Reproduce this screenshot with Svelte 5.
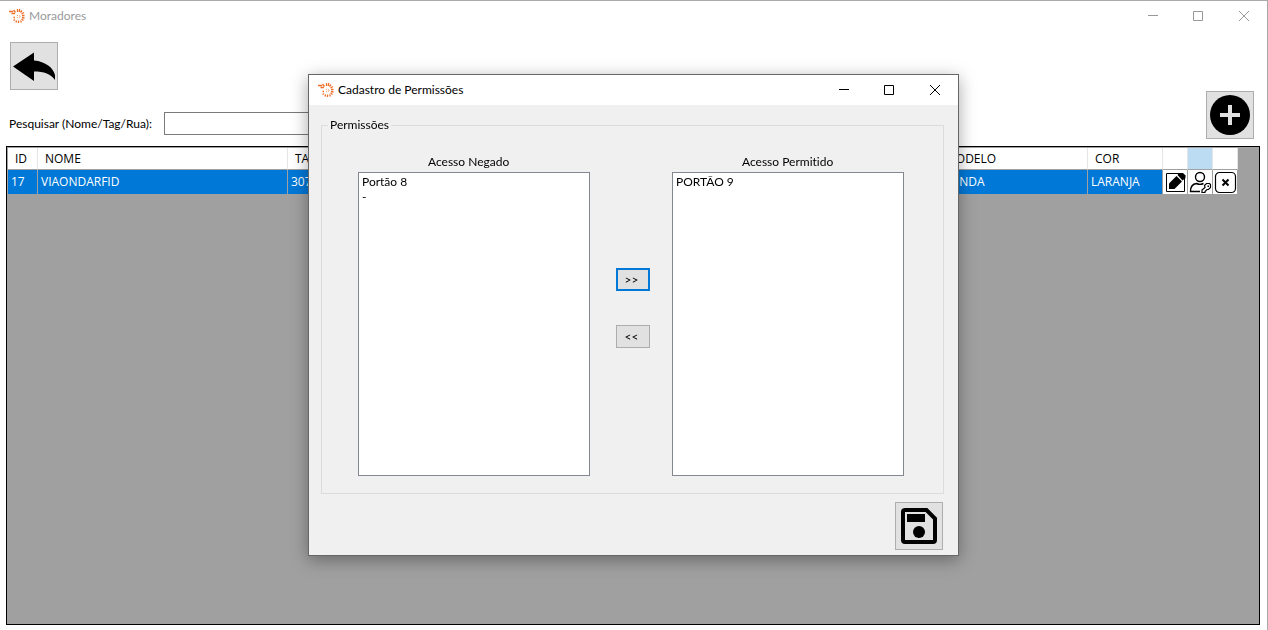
<script lang="ts">
  interface Resident {
    id: number
    name: string
    tag: string
    model: string
    color: string
  }

  const residents: Resident[] = [
    { id: 17, name: "VIAONDARFID", tag: "307", model: "HONDA", color: "LARANJA" },
  ]

  let search = $state("")
  let denied = $state(["Portão 8", "-"])
  let allowed = $state(["PORTÃO 9"])
  let deniedPicked: string[] = $state([])
  let allowedPicked: string[] = $state([])

  function grant() {
    allowed = [...allowed, ...deniedPicked]
    denied = denied.filter((gate) => !deniedPicked.includes(gate))
    deniedPicked = []
  }

  function revoke() {
    denied = [...denied, ...allowedPicked]
    allowed = allowed.filter((gate) => !allowedPicked.includes(gate))
    allowedPicked = []
  }
</script>

{#snippet titleBar(title: string)}
  <header class="title-bar">
    <svg class="logo" viewBox="0 0 16 16" aria-hidden="true">
      <g fill="none" stroke="#f0702a">
        <path
          d="M0 3.5h4M2.5 5.5H6M4.5 2l2 2.5M8.5 1v3M10.8 1l-.6 3M13 2.5l-1.5 2M15 4.5L12.5 6M15.5 7.5H13M15.5 10l-2.5-.5M14.5 12.5l-2-1.5M12.5 14.5l-1-2M9.5 15v-2.5M7 14.5l.5-2M4.5 12.5l1.5-1M4.5 9.5H6"
          stroke-width="1.3"
        />
        <circle cx="9.5" cy="8.5" r="1.5" stroke-width="0.8" stroke-dasharray="1.2 1.2" />
      </g>
    </svg>
    <span class="title">{title}</span>
    <div class="window-controls">
      <button type="button" aria-label="Minimizar">
        <svg viewBox="0 0 11 11"><path d="M1 4.5h10" /></svg>
      </button>
      <button type="button" aria-label="Maximizar">
        <svg viewBox="0 0 11 11"><path d="M0.5 0.5h9v9h-9z" /></svg>
      </button>
      <button type="button" aria-label="Fechar">
        <svg viewBox="0 0 11 11"><path d="M0 0l10 10M10 0l-10 10" /></svg>
      </button>
    </div>
  </header>
{/snippet}

<main class="window">
  {@render titleBar("Moradores")}

  <div class="toolbar">
    <div class="tools">
      <button type="button" class="tool-button" aria-label="Voltar">
        <svg viewBox="0 0 46 46">
          <path d="M2 23.5L23 9.5v8C34.5 18.5 42.5 25 44 32v5C40 31 33 28.5 23 28.5V38z" />
        </svg>
      </button>
      <div class="search">
        <label for="search">Pesquisar (Nome/Tag/Rua):</label>
        <input id="search" type="text" bind:value={search} />
      </div>
    </div>
    <button type="button" class="tool-button" aria-label="Adicionar">
      <svg viewBox="0 0 46 46">
        <circle cx="23" cy="23" r="20" />
        <path d="M23 13v20M13 23h20" stroke="#e1e1e1" stroke-width="4" />
      </svg>
    </button>
  </div>

  <div class="grid">
    <table>
      <colgroup>
        <col class="col-id" />
        <col class="col-name" />
        <col />
        <col class="col-model" />
        <col class="col-color" />
        <col class="col-action" />
        <col class="col-action" />
        <col class="col-action" />
      </colgroup>
      <thead>
        <tr>
          <th>ID</th>
          <th>NOME</th>
          <th>TAG</th>
          <th>MODELO</th>
          <th>COR</th>
          <th></th>
          <th class="current"></th>
          <th></th>
        </tr>
      </thead>
      <tbody>
        {#each residents as resident (resident.id)}
          <tr>
            <td>{resident.id}</td>
            <td>{resident.name}</td>
            <td>{resident.tag}</td>
            <td>{resident.model}</td>
            <td>{resident.color}</td>
            <td class="action">
              <button type="button" aria-label="Editar">
                <svg viewBox="0 0 24 24">
                  <path d="M17 3.5H3.5v18h18V8" fill="none" stroke="#000" />
                  <path d="M6 19v-5.5L13.5 6l5.5 5.5-7.5 7.5z" />
                  <path d="M14.5 5L16 3h4l2.5 2.5V8l-3 2.5z" />
                </svg>
              </button>
            </td>
            <td class="action">
              <button type="button" aria-label="Permissões">
                <svg viewBox="0 0 24 24" fill="none" stroke="#000" stroke-width="1.4">
                  <circle cx="12" cy="7" r="4.5" />
                  <path d="M12 21.5H2.5c0-5 2-7.5 6-8 2 1 5 1 7 0" />
                  <path d="M16.5 15.5l2-2h3l1 1v3l-2 2h-1.5L17 21.500v1h-3v-2.500l3-2.500z" stroke-width="1.2" />
                  <path d="M19.5 15.5h1.5v1.5h-1.5z" fill="#000" stroke="none" />
                </svg>
              </button>
            </td>
            <td class="action">
              <button type="button" aria-label="Excluir">
                <svg viewBox="0 0 24 24" fill="none" stroke="#000">
                  <rect x="2.5" y="2.5" width="20" height="20" rx="4" stroke-width="1.2" />
                  <path d="M9.5 9.5l6 6M15.5 9.5l-6 6" stroke-width="2" />
                </svg>
              </button>
            </td>
          </tr>
        {/each}
      </tbody>
    </table>
  </div>
</main>

<div class="overlay">
  <div class="dialog" role="dialog" aria-label="Cadastro de Permissões">
    {@render titleBar("Cadastro de Permissões")}
    <form class="dialog-body" onsubmit={(e) => e.preventDefault()}>
      <fieldset>
        <legend>Permissões</legend>
        <div class="transfer">
          <div class="side">
            <label for="denied">Acesso Negado</label>
            <select id="denied" multiple bind:value={deniedPicked}>
              {#each denied as gate}
                <option value={gate}>{gate}</option>
              {/each}
            </select>
          </div>
          <div class="moves">
            <button type="button" class="focused" aria-label="Permitir" onclick={grant}>&gt;&gt;</button>
            <button type="button" aria-label="Negar" onclick={revoke}>&lt;&lt;</button>
          </div>
          <div class="side">
            <label for="allowed">Acesso Permitido</label>
            <select id="allowed" multiple bind:value={allowedPicked}>
              {#each allowed as gate}
                <option value={gate}>{gate}</option>
              {/each}
            </select>
          </div>
        </div>
      </fieldset>
      <button type="submit" class="tool-button save" aria-label="Salvar">
        <svg viewBox="0 0 46 46">
          <path
            d="M9 7h21.5L39 15.5V37a2 2 0 0 1-2 2H9a2 2 0 0 1-2-2V9a2 2 0 0 1 2-2z"
            fill="none"
            stroke="#000"
            stroke-width="4"
          />
          <path d="M11 11h18v8H11z" />
          <circle cx="23" cy="29" r="6" />
        </svg>
      </button>
    </form>
  </div>
</div>

<style>
  :global(body) {
    margin: 0;
    background: #fff;
  }

  .window,
  .overlay {
    box-sizing: border-box;
    font-family: Lato, "Open Sans", sans-serif;
    font-size: 12px;
    font-variant-ligatures: none;
    line-height: 16px;
    color: #000;
  }

  button,
  input,
  select {
    box-sizing: border-box;
    margin: 0;
    font: inherit;
    color: inherit;
  }

  .window {
    display: flex;
    flex-direction: column;
    min-height: 100vh;
    padding-bottom: 5px;
    border-top: 1px solid #a9a9a9;
    border-right: 1px solid #a9a9a9;
  }

  .title-bar {
    display: flex;
    align-items: center;
    height: 30px;
    padding-left: 9px;
    background: #fff;
  }

  .window > .title-bar {
    color: #999;
  }

  .logo {
    width: 16px;
    height: 16px;
    margin-right: 4px;
  }

  .title {
    flex: 1;
  }

  .window-controls {
    display: flex;
  }

  .window-controls button {
    display: flex;
    align-items: center;
    justify-content: center;
    width: 46px;
    height: 30px;
    padding: 0;
    border: 0;
    background: none;
  }

  .window-controls svg {
    width: 11px;
    height: 11px;
    fill: none;
    stroke: currentColor;
  }

  .toolbar {
    display: flex;
    align-items: flex-end;
    justify-content: space-between;
    padding: 11px 13px 7px 9px;
  }

  .tools {
    padding-bottom: 4px;
  }

  .tools .tool-button {
    margin: 0 0 22px 1px;
  }

  .tool-button {
    display: block;
    width: 48px;
    height: 48px;
    padding: 0;
    border: 1px solid #adadad;
    background: #e1e1e1;
  }

  .tool-button svg {
    display: block;
    width: 46px;
    height: 46px;
  }

  .search {
    display: flex;
    align-items: center;
  }

  .search label {
    width: 155px;
    white-space: nowrap;
  }

  .search input {
    width: 320px;
    height: 23px;
    padding: 0 4px;
    border: 1px solid #7a7a7a;
    background: #fff;
  }

  .grid {
    flex: 1;
    margin: 0 7px 0 6px;
    padding: 1px 21px 1px 1px;
    border: 1px solid #000;
    background: #a0a0a0;
    font-family: "Open Sans", "Noto Sans", sans-serif;
  }

  table {
    width: 100%;
    table-layout: fixed;
    border-collapse: separate;
    border-spacing: 0;
  }

  .col-id {
    width: 30px;
  }

  .col-name {
    width: 250px;
  }

  .col-model {
    width: 150px;
  }

  .col-color {
    width: 75px;
  }

  .col-action {
    width: 25px;
  }

  th {
    height: 21px;
    padding: 0 0 0 7px;
    border-right: 1px solid #e5e5e5;
    border-bottom: 1px solid #a0a0a0;
    background: #fff;
    font-weight: 400;
    text-align: left;
  }

  th.current {
    background: #bcdcf4;
  }

  td {
    height: 24px;
    padding: 0 0 0 3px;
    border-right: 1px solid #a0a0a0;
    background: #0078d7;
    color: #fff;
  }

  td.action {
    padding: 0;
    background: #fff;
  }

  td.action button {
    display: block;
    width: 24px;
    height: 24px;
    padding: 0;
    border: 0;
    background: none;
  }

  td.action svg {
    display: block;
    width: 24px;
    height: 24px;
  }

  .overlay {
    position: fixed;
    inset: 0;
    display: flex;
    align-items: center;
    justify-content: center;
    padding-right: 1px;
  }

  .dialog {
    border: 1px solid #666;
    background: #f0f0f0;
    box-shadow: 0 4px 16px rgba(0, 0, 0, 0.35);
  }

  .dialog-body {
    padding: 12px 14px 5px 12px;
  }

  fieldset {
    margin: 0 0 8px 0;
    padding: 21px 39px 17px 36px;
    border: 1px solid #dcdcdc;
  }

  legend {
    margin-left: -30px;
    padding: 0 2px;
  }

  .transfer {
    display: flex;
  }

  .side {
    display: flex;
    flex-direction: column;
    gap: 2px;
  }

  .side label {
    padding-left: 70px;
  }

  .side select {
    width: 232px;
    height: 304px;
    padding: 1px;
    border: 1px solid #828790;
    border-radius: 0;
    background: #fff;
    outline: 0;
    overflow: hidden;
  }

  .side option {
    min-height: 15px;
    padding: 0 2px;
    line-height: 15px;
  }

  .moves {
    display: flex;
    flex-direction: column;
    gap: 34px;
    margin: 114px 22px 0 26px;
  }

  .moves button {
    width: 34px;
    height: 23px;
    padding: 0 3px 0 0;
    border: 1px solid #adadad;
    background: #e1e1e1;
    line-height: 15px;
  }

  .moves .focused {
    border: 2px solid #0078d7;
  }

  .save {
    margin-left: auto;
    margin-right: 1px;
  }
</style>
